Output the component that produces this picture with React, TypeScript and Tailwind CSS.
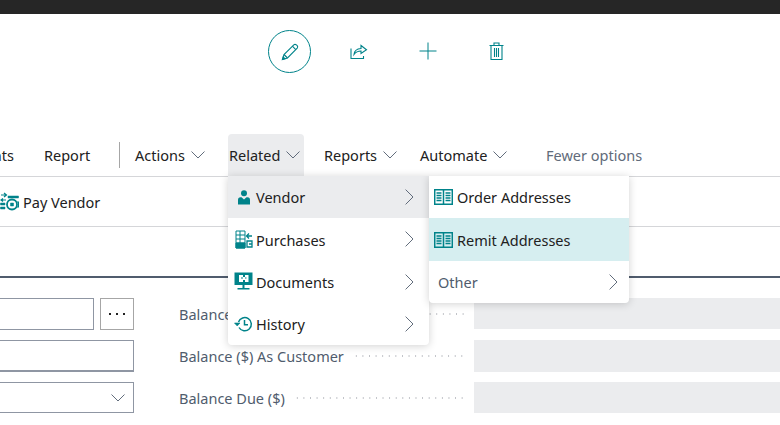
const teal = "#00838a";

const PencilIcon = () => (
  <svg width="20" height="20" viewBox="0 0 20 20" fill="none" stroke={teal} strokeWidth="1.1">
    <path d="M2.5 17.5 L4 12.5 L13.8 2.8 Q15 1.8 16.4 2.9 L17.2 3.7 Q18.2 5 17.2 6.2 L7.5 16 Z" />
    <path d="M4 12.5 L7.5 16 M12.4 4.2 L15.8 7.6" />
    <path d="M2.5 17.5 L3.2 15 L5 16.8 Z" fill={teal} />
  </svg>
);

const ShareIcon = () => (
  <svg width="18" height="18" viewBox="0 0 18 18" fill="none" stroke={teal} strokeWidth="1.1">
    <path d="M1 6.5 V16.5 H13.5 V14" />
    <path d="M4 12.5 Q4.5 7 11 6.5 V3.5 L16.5 7.8 L11 11.5 V9 Q6.5 9 4 12.5 Z" />
  </svg>
);

const PlusIcon = () => (
  <svg width="18" height="18" viewBox="0 0 18 18" fill="none" stroke={teal} strokeWidth="1">
    <path d="M0.5 9 H17.5 M9 0.5 V17.5" />
  </svg>
);

const TrashIcon = () => (
  <svg width="15" height="18" viewBox="0 0 15 18" fill="none" stroke={teal} strokeWidth="1.1">
    <path d="M0.5 3.5 H14.5 M2 3.5 V17.5 H13 V3.5 M5 3.5 V1 H10 V3.5 M5.5 6 V15 M7.5 6 V15 M9.5 6 V15" />
  </svg>
);

const PersonIcon = () => (
  <svg width="12" height="15" viewBox="0 0 12 15" fill={teal}>
    <circle cx="6" cy="3.2" r="3" />
    <path d="M0 14.5 V10 Q0 7.2 2.5 7.2 H3.5 L6 9.5 L8.5 7.2 H9.5 Q12 7.2 12 10 V14.5 Z" />
  </svg>
);

const PurchasesIcon = () => (
  <svg width="18" height="19" viewBox="0 0 18 19" fill="none" stroke={teal}>
    <path d="M1 1 H10 V18 H1 Z M1 5 H10 M1 9 H10 M1 13 H10 M5 1 V18" />
    <path d="M1 13 H10 V18 H1 Z" fill={teal} />
    <path d="M17 6 H12 M14 3.5 L11.5 6 L14 8.5" strokeWidth="1.3" />
    <path d="M12 11 H17 V17 H12 Z M14 14 H17" strokeWidth="1.3" />
  </svg>
);

const DocumentsIcon = () => (
  <svg width="19" height="19" viewBox="0 0 19 19">
    <path d="M0.5 0.5 H18.5 V13 H0.5 Z" fill={teal} />
    <path d="M5 3 H9 V5 H11 V3 H14.5 V10 H11 V8 H9 V10 H5 Z" fill="#fff" />
    <path d="M7 6 H9 M11 6 H12.5" stroke={teal} />
    <path d="M8.5 13 V16 H10.5 V13 Z M3.5 16 H15.5 V17.5 H3.5 Z" fill={teal} />
  </svg>
);

const HistoryIcon = () => (
  <svg width="19" height="16" viewBox="0 0 19 16" fill="none" stroke={teal} strokeWidth="1.5">
    <path d="M4.5 6 A6.6 6.6 0 1 1 5 11.5" />
    <path d="M0.5 7 H6 L3.2 10 Z" fill={teal} strokeWidth="0.6" />
    <path d="M10.5 4 V8.7 H14" />
  </svg>
);

const BookIcon = () => (
  <svg width="19" height="16" viewBox="0 0 19 16" fill="none" stroke={teal} strokeWidth="1.4">
    <path d="M0.7 0.7 H9.5 V15.3 H0.7 Z M9.5 0.7 H18.3 V15.3 H9.5 Z" strokeWidth="1.5" />
    <path d="M2.5 4 H7.5 M2.5 6.5 H7.5 M2.5 9 H7.5 M2.5 11.5 H7.5 M11.5 4 H16.5 M11.5 6.5 H16.5 M11.5 9 H16.5 M11.5 11.5 H16.5" />
  </svg>
);

const PayVendorIcon = () => (
  <svg width="19" height="19" viewBox="0 0 19 19" fill="none" stroke={teal}>
    <path d="M1 3 H6 M4 1 L6.5 3 L4 5" strokeWidth="1.2" />
    <path d="M8 4 H18.5 V6 H8 Z" fill={teal} strokeWidth="0.5" />
    <path d="M1 8 H6 M3 6.5 L1 8 L3 9.5" strokeWidth="1.2" />
    <path d="M0.5 11 H5 V13 H0.5 Z M0.5 15 H5 V17 H0.5 Z" fill={teal} strokeWidth="0.5" />
    <circle cx="12" cy="12.5" r="5" strokeWidth="1.8" />
    <path d="M17 10 H18.5 V15 H17" strokeWidth="1.2" />
    <path d="M10.5 11 H13.5 V14 H10.5 Z" fill={teal} strokeWidth="0.5" />
  </svg>
);

const DownChevron = () => (
  <svg width="14" height="8" viewBox="0 0 14 8" fill="none" stroke="#505c6d" strokeWidth="0.9">
    <path d="M0.5 0.5 L7 7 L13.5 0.5" />
  </svg>
);

const RightChevron = () => (
  <svg width="9" height="16" viewBox="0 0 9 16" fill="none" stroke="#505c6d" strokeWidth="0.9">
    <path d="M0.6 0.6 L8 8 L0.6 15.4" />
  </svg>
);

const related = [
  { label: "Vendor", icon: <PersonIcon />, active: true },
  { label: "Purchases", icon: <PurchasesIcon />, active: false },
  { label: "Documents", icon: <DocumentsIcon />, active: false },
  { label: "History", icon: <HistoryIcon />, active: false },
];

const NavMenu = ({ label, width }: { label: string; width: string }) => (
  <div className={`flex items-center gap-[6px] ${width}`}>
    <span className="pt-[2px]">{label}</span>
    <DownChevron />
  </div>
);

const FieldLabel = ({ label }: { label: string }) => (
  <div className="flex h-full w-[288px] items-center text-[#505c6d]">
    <span className="mr-[9px] whitespace-nowrap pt-[2px]">{label}</span>
    <span className="h-[2px] flex-1 bg-[radial-gradient(circle,#bfc1c6_0.7px,transparent_0.9px)] bg-[length:6.6px_2px]" />
  </div>
);

export default function App() {
  return (
    <div className="relative h-[425px] w-[780px] overflow-hidden bg-white font-['Noto_Sans','Open_Sans',sans-serif] text-[14.5px] text-[#212121]">
      <div className="h-[14px] bg-[#262626]" />

      <div className="flex h-[120px] items-start pl-[255px] pt-[16px]">
        <div className="flex h-[43px] w-[69px] items-center justify-center">
          <div className="flex h-[43px] w-[43px] items-center justify-center rounded-full border border-[#00838a]">
            <PencilIcon />
          </div>
        </div>
        <div className="flex h-[41px] w-[69px] items-center justify-center"><ShareIcon /></div>
        <div className="flex h-[41px] w-[69px] items-center justify-center"><PlusIcon /></div>
        <div className="flex h-[41px] w-[69px] items-center justify-center"><TrashIcon /></div>
      </div>

      <div className="flex h-[43px] items-center border-b border-[#d5d6d9] whitespace-nowrap">
        <div className="flex w-[14px] justify-end pt-[2px]">
          <span className="shrink-0">Discounts</span>
        </div>
        <span className="ml-[30px] w-[75px] pt-[2px]">Report</span>
        <span className="h-[26px] w-px bg-[#a6a6a6]" />
        <span className="w-[15px]" />
        <NavMenu label="Actions" width="w-[93px]" />
        <div className="flex h-[42px] w-[76px] items-center gap-[6px] self-start rounded-t-sm bg-[#ebecee] pl-px">
          <span className="pt-[2px]">Related</span>
          <DownChevron />
        </div>
        <span className="w-[20px]" />
        <NavMenu label="Reports" width="w-[96px]" />
        <NavMenu label="Automate" width="w-[126px]" />
        <span className="pt-[2px] text-[#616b7a]">Fewer options</span>
      </div>

      <div className="flex h-[50px] items-center gap-[4px] border-b border-[#d5d6d9]">
        <PayVendorIcon />
        <span className="pt-[2px]">Pay Vendor</span>
      </div>

      <div className="mt-[49px] h-[2px] bg-[#505c6d]" />

      <div className="mt-[20px] flex flex-col gap-[10px]">
        <div className="flex h-[32px]">
          <div className="-ml-[8px] h-full w-[102px] border border-[#8f96a3]" />
          <div className="ml-[6px] flex h-full w-[34px] items-center justify-center gap-[5px] border border-[#a6a6a6]">
            <span className="h-[2px] w-[2px] bg-[#212121]" />
            <span className="h-[2px] w-[2px] bg-[#212121]" />
            <span className="h-[2px] w-[2px] bg-[#212121]" />
          </div>
          <div className="ml-[45px]"><FieldLabel label="Balance ($)" /></div>
          <div className="ml-[7px] h-[31px] flex-1 bg-[#ebecee]" />
        </div>
        <div className="flex h-[32px]">
          <div className="-ml-[8px] h-full w-[142px] border border-b-2 border-[#8f96a3]" />
          <div className="ml-[45px]"><FieldLabel label="Balance ($) As Customer" /></div>
          <div className="ml-[7px] h-full flex-1 bg-[#ebecee]" />
        </div>
        <div className="flex h-[31px]">
          <div className="-ml-[8px] flex h-full w-[142px] items-center justify-end border border-[#8f96a3] pr-[8px]">
            <DownChevron />
          </div>
          <div className="ml-[45px]"><FieldLabel label="Balance Due ($)" /></div>
          <div className="ml-[7px] h-full flex-1 bg-[#ebecee]" />
        </div>
      </div>

      {/* open Related flyout */}
      <div className="absolute left-[228px] top-[176px] w-[201px] rounded-b-sm bg-white shadow-[0_1px_8px_rgba(0,0,0,0.18)]">
        {related.map((item) => (
          <div
            key={item.label}
            className={`flex h-[42.25px] items-center pr-[15px] ${item.active ? "bg-[#ebecee]" : ""}`}
          >
            <span className="flex w-[28px] shrink-0 items-center justify-center pl-[3px]">{item.icon}</span>
            <span className="flex-1 pt-[2px]">{item.label}</span>
            <RightChevron />
          </div>
        ))}
      </div>

      <div className="absolute left-[429px] top-[176px] w-[200px] rounded-b-sm bg-white shadow-[0_1px_8px_rgba(0,0,0,0.18)]">
        <div className="flex h-[42px] items-center gap-[4px] pl-[5px]">
          <BookIcon />
          <span className="pt-[2px]">Order Addresses</span>
        </div>
        <div className="flex h-[43px] items-center gap-[4px] bg-[#d6eef0] pl-[5px]">
          <BookIcon />
          <span className="pt-[2px]">Remit Addresses</span>
        </div>
        <div className="flex h-[42px] items-center justify-between pl-[9px] pr-[11px] text-[#505c6d]">
          <span className="pt-[2px]">Other</span>
          <RightChevron />
        </div>
      </div>
    </div>
  );
}
